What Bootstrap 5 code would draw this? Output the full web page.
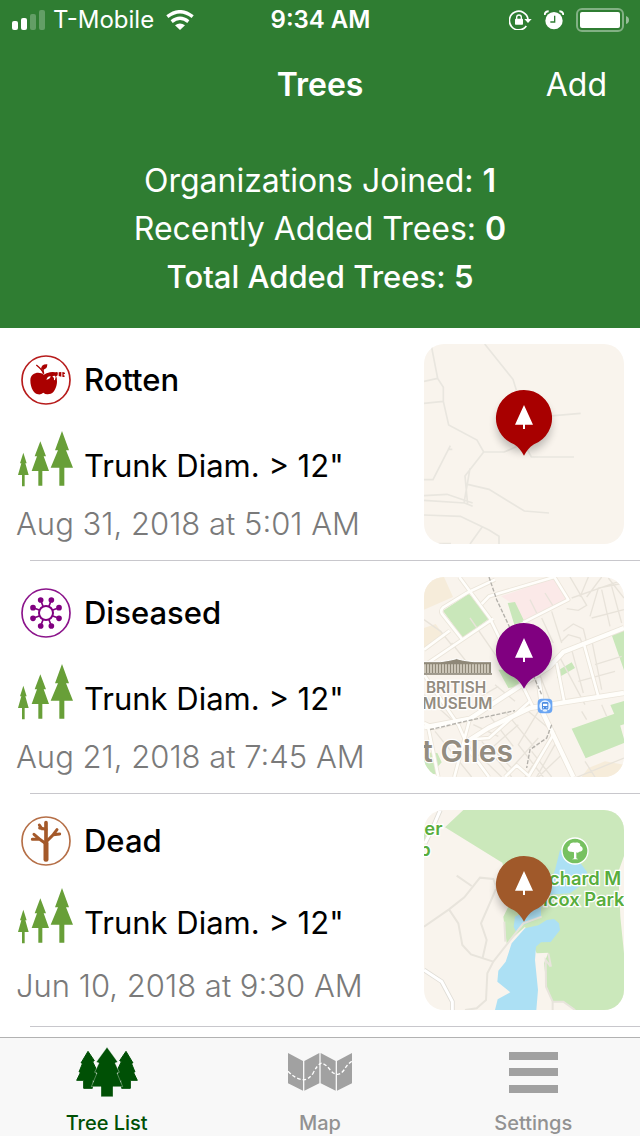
<!DOCTYPE html>
<html lang="en">
<head>
<meta charset="utf-8">
<meta name="viewport" content="width=device-width, initial-scale=1">
<title>Trees</title>
<link href="https://cdn.jsdelivr.net/npm/bootstrap@5.3.0/dist/css/bootstrap.min.css" rel="stylesheet">
<style>
  body { font-family: Inter, "Liberation Sans", sans-serif; color: #000; background: #fff; }
  svg { display: block; flex: none; }
  .app-head { background: #2f7d32; color: #fff; }
  .side { flex: 1 1 0; }
  .status-bar { height: 40px; padding: 0 11px 0 12px; font-size: 24px; line-height: 40px; }
  .carrier { gap: 8px; }
  .indicators { gap: 12px; }
  .title-bar { height: 88px; padding: 1px 33px 0; font-size: 32px; line-height: 88px; }
  .title-bar h1 { font-size: 32px; line-height: 88px; font-weight: 600; }
  .add-btn { border: 0; padding: 0; background: none; color: #fff; font-size: 32px; line-height: 88px; }
  .stats { height: 200px; padding-top: 29px; font-size: 32px; line-height: 48px; }
  .total { font-size: 31px; font-weight: 500; }
  .tree-row { height: 233px; padding: 16px; position: relative; }
  .tree-row::after { content: ""; position: absolute; left: 30px; right: 0; bottom: 0; height: 1px; background: #c8c7cc; }
  .info { padding-top: 11px; }
  .state { height: 50px; gap: 13px; padding-left: 5px; font-size: 31px; font-weight: 500; }
  .trunk { height: 56px; gap: 11px; padding-left: 2px; margin-top: 26px; font-size: 31px; }
  .trunk span { padding-top: 12px; }
  .when { font-size: 31px; font-weight: 300; line-height: 40px; color: #7a7a7a; margin-top: 17px; }
  .tree-row.tall .info { padding-top: 6px; }
  .tree-row.tall .trunk { margin-top: 22px; }
  .tree-row.tall .when { margin-top: 22px; }
  .thumb { width: 200px; height: 200px; border-radius: 20px; overflow: hidden; }
  .tab-strip { height: 99px; background: #f8f8f8; border-top: 1px solid #b2b2b2; font-size: 20px; font-weight: 500; }
  .tab-strip a { color: #929292; text-decoration: none; padding-top: 8px; line-height: 24px; gap: 13px; }
  .tab-strip a.active { color: #005005; }
</style>
</head>
<body class="d-flex flex-column min-vh-100">

<svg width="0" height="0" class="position-absolute" aria-hidden="true">
  <defs>
    <filter id="soft" x="-50%" y="-50%" width="200%" height="200%"><feGaussianBlur stdDeviation="13"/></filter>
    <symbol id="pin" viewBox="0 0 240 260" overflow="visible">
      <circle cx="120" cy="120" r="82" fill="#000" opacity=".24" filter="url(#soft)"/>
      <path d="M120 16a84 84 0 0 1 30 162.500c-14 8-22 20-30 35c-8-15-16-27-30-35A84 84 0 0 1 120 16z" fill="currentColor"/>
      <path d="M120 61l27 59h-24v13h-6v-13h-24z" fill="#fff"/>
    </symbol>
    <symbol id="trunks" viewBox="0 0 165 168">
      <g fill="#689f38">
        <path d="M16 65l10 32h-4l10 35H20v34h-8v-34H0l10-35H6z"/>
        <path d="M67 31l17 45h-7l16 44H73v44H61v-44H41l16-44h-7z"/>
        <path d="M132 0l21 58h-9l21 52h-26v54h-15v-54H98l22-52h-9z"/>
      </g>
    </symbol>
  </defs>
</svg>

<header class="app-head">
  <div class="status-bar d-flex align-items-center">
    <div class="side carrier d-flex align-items-center">
      <svg width="33" height="20" viewBox="0 0 33 20" fill="#fff"><rect y="11" width="6" height="9" rx="2"/><rect x="9" y="8" width="6" height="12" rx="2"/><g opacity=".25"><rect x="18" y="4" width="6" height="16" rx="2"/><rect x="27" width="6" height="20" rx="2"/></g></svg>
      <span>T-Mobile</span>
      <svg class="ms-1" width="28" height="20" viewBox="0 0 84 60" fill="none" stroke="#fff" stroke-width="10"><path d="M4 20Q42 -10 80 20M17 35Q42 15 67 35"/><path d="M27 46Q42 35 57 46L42 60z" fill="#fff" stroke="none"/></svg>
    </div>
    <span class="fw-semibold">9:34 AM</span>
    <div class="side indicators d-flex align-items-center justify-content-end">
      <svg width="23" height="20" viewBox="0 0 69 60"><path d="M52 48A28 28 0 1 1 57 28" fill="none" stroke="#fff" stroke-width="5"/><path d="M46 27h22L57 39z" fill="#fff"/><rect x="18" y="26" width="24" height="18" rx="2" fill="#fff"/><path d="M23 27v-5a7 7 0 0 1 14 0v5" fill="none" stroke="#fff" stroke-width="4"/></svg>
      <svg width="20" height="20" viewBox="0 0 60 60"><circle cx="30" cy="32" r="26" fill="#fff"/><path d="M2 15Q3 4 14 4M58 15Q57 4 46 4" stroke="#fff" stroke-width="6" fill="none"/><path d="M32 17v19H19" stroke="#2f7d32" stroke-width="4" fill="none"/></svg>
      <svg width="53" height="24" viewBox="0 0 53 24"><rect x="1" y="1" width="46" height="22" rx="5" fill="none" stroke="#fff" stroke-opacity=".4" stroke-width="2"/><rect x="4" y="4" width="40" height="16" rx="2" fill="#fff"/><path d="M50 8q3 1 3 4t-3 4z" fill="#fff" opacity=".5"/></svg>
    </div>
  </div>
  <nav class="title-bar d-flex">
    <span class="side"></span>
    <h1 class="m-0">Trees</h1>
    <span class="side text-end"><button type="button" class="add-btn">Add</button></span>
  </nav>
  <div class="stats text-center">
    <div>Organizations Joined: <span class="fw-semibold">1</span></div>
    <div>Recently Added Trees: <span class="fw-semibold">0</span></div>
    <div class="total">Total Added Trees: <span class="fw-semibold">5</span></div>
  </div>
</header>

<main class="flex-grow-1">
  <article class="tree-row d-flex justify-content-between">
    <div class="info">
      <div class="state d-flex align-items-center">
        <svg width="50" height="50" viewBox="0 0 150 150"><circle cx="75" cy="75" r="72" fill="none" stroke="#b71c1c" stroke-width="5"/><path d="M68 59C58 50 29 50 28 76C28 100 40 118 52 118Q60 119 67 113Q75 120 84 117C97 118 108 97 108 80Q109 69 104 61L110 55Q99 49 87 52Q76 54 68 59z" fill="#a00"/><path d="M68 57Q65 45 46 30M68 56Q65 45 67 40" fill="none" stroke="#a00" stroke-width="4"/><path d="M60 44Q60 27 79 28Q79 46 60 44z" fill="#a00"/><path d="M103 53q4-3 7-1v9l-9 6zM113 52l8-1v14l-8-2zM124 51q9 0 8 6h-4v4l4 2q-2 4-8 2z" fill="#a00"/><path d="M76 74q4-11 13-10q-1 9-13 10zM94 64q9-4 10 3q-1 9-5 9q2-7-5-12z" fill="#fff"/></svg>
        <span>Rotten</span>
      </div>
      <div class="trunk d-flex"><svg width="55" height="56"><use href="#trunks"/></svg><span>Trunk Diam. &gt; 12"</span></div>
      <div class="when">Aug 31, 2018 at 5:01 AM</div>
    </div>
    <svg class="thumb" viewBox="27 27 600 600" role="img" aria-label="Map">
      <path fill="#f9f4ed" d="M27 27h600v600H27z"/>
      <path d="M48 27L68 130L85 157V199L101 270L186 315L206 351H268L327 325L349 366H477M27 139L68 130M27 205L85 199M209 27L294 133L330 249L497 235M27 434H54L106 332M98 343h14M206 351L150 423L158 510M165 400L147 504M158 448L222 463L328 528L402 534M27 482L96 478L173 504M27 496L149 504L173 514M27 540L136 544L222 585L252 604V627M202 575L165 627M70 626H108" fill="none" stroke="#e9e6df" stroke-width="5"/>
      <use href="#pin" x="207" y="149" width="240" height="260" color="#a80000"/>
    </svg>
  </article>

  <article class="tree-row d-flex justify-content-between">
    <div class="info">
      <div class="state d-flex align-items-center">
        <svg width="50" height="50" viewBox="-75 -75 150 150" fill="none" stroke="#800080" stroke-width="6"><circle r="72" stroke-width="5" stroke="#8b148b"/><circle r="21"/>
          <path d="M9 -20L16 -39M20 -9L39 -16M20 9L39 16M9 20L16 39M-9 20L-16 39M-20 9L-39 16M-20 -9L-39 -16M-9 -20L-16 -39" stroke-width="5"/>
          <path d="M16 -39h.1M39 -16h.1M39 16h.1M16 39h.1M-16 39h.1M-39 16h.1M-39 -16h.1M-16 -39h.1" stroke-width="17" stroke-linecap="round"/></svg>
        <span>Diseased</span>
      </div>
      <div class="trunk d-flex"><svg width="55" height="56"><use href="#trunks"/></svg><span>Trunk Diam. &gt; 12"</span></div>
      <div class="when">Aug 21, 2018 at 7:45 AM</div>
    </div>
    <svg class="thumb" viewBox="27 27 600 600" role="img" aria-label="Map of the British Museum and St Giles">
      <defs>
        <path id="streets" d="M133 27L224 150L353 415M235 152L27 293M27 245L104 188M240 35L155 75L85 118Q76 126 80 136L142 215L235 152M200 108L222 85L418 27L460 95L325 163M505 222L550 385M425 285L448 403M27 320L130 470L165 550L222 627M27 465L60 480L165 452M40 480L70 627M165 450L118 627M160 515L222 510L345 400M270 627l35-35l40 35M415 500L340 627"/>
        <path id="avenues" d="M627 180L445 252L405 295L165 452L27 478M627 375L448 403L345 420L220 480L165 515M370 330L384 435L475 627"/>
      </defs>
      <path fill="#f9f4ed" d="M27 27h600v600H27z"/>
      <path fill="#f6ecda" d="M27 27h60l27 60l-87 38zM27 180l35-12l28 40l-63 37zM520 600l50-20l57 10v37H500z"/>
      <path fill="#fbe9e8" d="M258 85L425 27L458 95L325 158L290 105z"/>
      <path fill="#c9e7ba" d="M84 128L162 77L222 152L143 209zM278 105l22-3l28 58l-30 10zM588 195l39-15v127zM425 310l45-27l10 17l-53 31zM470 482l135-47l22 78v12l-115 46zM586 411l41-12v70l-14 4zM250 305h50l20 50l-40 5zM27 553l40 2l13 28l-18 20l8 15H52l-25-30z"/>
      <path fill="none" stroke="#e8e3da" stroke-width="4" d="M465 27l50 85l-25 15l-35-5M520 27l-25 60M560 27l-45 60M580 30l47 60M525 145L550 60L627 45M470 90l157-55M530 150l97-25M560 65l25 110M590 55l30 110M445 190l30-22l30 15l10 40M440 220l20-20l35 10l10 25M27 155l50 35l40 50M110 225l75 95M165 150l90 130M345 95l20 40M390 75l25 40M380 150l35 75M410 130l30 95M430 260l80 150M470 245l35 130M530 215l30 150M540 290l80-25M490 340l110-30M350 260l60 150M175 470l75 35M225 445l70 90M270 430l90 110M310 470l-80 70l60 60l80-90M340 430l60 50M370 430l-60 100l75 97M200 520l90 107M190 560l70 67M420 490l-90 137M425 520l-60 107M440 560l-70 67M350 550l60 77M500 430l15 25M560 410l15 35M510 580l30 47M60 490l110 137M27 380l110 100M240 350l60 50M190 390l60-35M480 630l147-60"/>
      <g fill="none" stroke="#ebe5da" stroke-linejoin="round"><use href="#streets" stroke-width="13"/><use href="#avenues" stroke-width="18"/></g>
      <g fill="none" stroke="#fffefb" stroke-linejoin="round"><use href="#streets" stroke-width="8"/><use href="#avenues" stroke-width="13"/></g>
      <path d="M222 27L245 95L285 180L345 300L380 380M45 485L150 460L300 428M410 470L395 510L345 545L335 600" fill="none" stroke="#b3b0aa" stroke-width="4" stroke-dasharray="12 5"/>
      <path fill="#8f8878" stroke="#fff" stroke-width="3" d="M20 281h57l26-4l22-5l20 5l30 4h55v36H20z"/>
      <path d="M27 302h198" stroke="#cbc5b7" stroke-width="27" stroke-dasharray="6 3"/>
      <path d="M22 318H231" stroke="#867f71" stroke-width="4"/>
      <g fill="#938c80" stroke="#fff" stroke-width="7" paint-order="stroke" font-weight="600">
        <text x="33" y="374" font-size="46">BRITISH</text>
        <text x="22" y="422" font-size="46">MUSEUM</text>
        <text x="22" y="583" font-size="90">t Giles</text>
      </g>
      <rect x="368" y="392" width="44" height="44" rx="12" fill="#69a5f3"/><circle cx="390" cy="414" r="17" fill="#e5f2ff"/><rect x="381" y="402" width="19" height="22" rx="4" fill="#4b8ce2"/><path d="M384 407h13v7h-13zM384 418h3v3h-3zM394 418h3v3h-3z" fill="#fff"/><path d="M384 424l-4 5M396 424l4 5" stroke="#4b8ce2" stroke-width="3"/>
      <use href="#pin" x="207" y="149" width="240" height="260" color="#800080"/>
    </svg>
  </article>

  <article class="tree-row tall d-flex justify-content-between">
    <div class="info">
      <div class="state d-flex align-items-center">
        <svg width="50" height="50" viewBox="0 0 150 150" fill="none" stroke="#a4592a" stroke-linecap="round" stroke-linejoin="round"><circle cx="75" cy="75" r="72" stroke-width="5" stroke="#b56f47"/><path d="M75 130V20" stroke-width="11"/><path d="M75 130V82" stroke-width="15"/><path d="M75 40L56 36M62 38L55 27M75 83L55 69L34 70M54 68L39 55M75 78L97 56L116 54M97 55L108 41" stroke-width="9"/></svg>
        <span>Dead</span>
      </div>
      <div class="trunk d-flex"><svg width="55" height="56"><use href="#trunks"/></svg><span>Trunk Diam. &gt; 12"</span></div>
      <div class="when">Jun 10, 2018 at 9:30 AM</div>
    </div>
    <svg class="thumb" viewBox="27 30 600 600" role="img" aria-label="Map of Richard M Wilcox Park">
      <path fill="#f9f4ed" d="M27 30h600v600H27z"/>
      <path fill="#cbe8bb" d="M145 30H627V168L610 215L616 350L627 460V630H482L447 605H413L395 560L387 490L400 458L365 460L330 380L275 430L265 350L290 300L262 188L90 82zM27 30H68L27 52zM27 80l12 10l-12 35z"/>
      <g fill="#ace0f4"><path d="M435 150L478 165L517 217L500 255L465 280L390 285L420 210zM300 350L378 310V350L325 375L304 398L296 380z"/><path d="M435 390L432 370L417 357L395 360L370 376L330 385L290 430L272 485L250 512L247 545L286 577L248 598L240 630H364L369 570L360 480L363 440L378 427L407 426z"/></g>
      <path fill="none" stroke="#e8e4dc" stroke-width="6" d="M27 380L102 328L148 292L195 233L235 237L255 290M125 227L170 258M102 328L130 370L142 435L168 463L235 485L325 370L380 350M243 267L198 370L215 420L203 473M235 485L217 520L213 600L185 625L150 630M268 365l3 60M413 630V605L393 560L392 480L407 500M400 460L408 500M413 605H445L480 630"/>
      <path fill="none" stroke="#e0ddd6" stroke-width="14" d="M27 510L80 545L112 605V630M76 30L50 90L30 130"/>
      <path fill="none" stroke="#fff" stroke-width="9" d="M27 510L80 545L112 605V630M76 30L50 90L30 130"/>
      <circle cx="480" cy="153" r="39" fill="#77c160" stroke="#fff" stroke-width="4"/>
      <path d="M480 128c14-3 18 7 15 9c12 4 10 18-2 18q-5 5-9 2v18l6 3h-19l6-3v-18l-8-2c-12 2-15-14-6-17c1-9 10-12 17-10z" fill="#fff"/>
      <g fill="#58ad3c" stroke="#fff" stroke-width="8" paint-order="stroke" font-weight="600" font-size="55">
        <text x="28" y="104">er</text><text x="13" y="167">b</text>
        <text x="402" y="255">chard M</text><text x="384" y="319">lcox Park</text>
      </g>
      <use href="#pin" x="207" y="152" width="240" height="260" color="#a0592a"/>
    </svg>
  </article>
</main>

<nav class="tab-strip sticky-bottom d-flex">
  <a href="#list" class="side active d-flex flex-column align-items-center">
    <svg width="62" height="52" viewBox="0 0 186 156"><g fill="#005005" stroke="#005005" stroke-width="3" stroke-linejoin="round"><path d="M36 16L55 44L50 47L62 72L56 75L69 103H49V127H23V103H2L14 78H9L20 51H15z"/><path d="M150 16L131 44L136 47L124 72L130 75L117 103H137V127H163V103H184L172 78H177L166 51H171z"/></g><path d="M93 4L125 48L117 51L130 79L123 81L140 122H111V152H75V122H46L63 81L56 79L69 51L61 48z" fill="#005005" stroke="#f8f8f8" stroke-width="1"/></svg>
    <span>Tree List</span>
  </a>
  <a href="#map" class="side d-flex flex-column align-items-center">
    <svg width="64" height="52" viewBox="0 0 192 156"><path d="M0 21L45 45V134L0 112zM49 45L94 21V112L49 134zM98 21L143 45V134L98 112zM147 45L192 21V112L147 134z" fill="#a1a1a1"/><path d="M0 76Q22 99 45 101Q60 103 75 82Q89 55 99 52Q110 50 130 76Q151 96 168 72Q178 54 192 46" fill="none" stroke="#fff" stroke-width="4" stroke-dasharray="11 6"/></svg>
    <span>Map</span>
  </a>
  <a href="#settings" class="side d-flex flex-column align-items-center">
    <svg width="49" height="52" viewBox="0 0 49 52" fill="#a1a1a1"><path d="M0 6h49v8H0zM0 22h49v8H0zM0 39h49v8H0z"/></svg>
    <span>Settings</span>
  </a>
</nav>
<script src="https://cdn.jsdelivr.net/npm/bootstrap@5.3.0/dist/js/bootstrap.bundle.min.js"></script>
</body>
</html>
